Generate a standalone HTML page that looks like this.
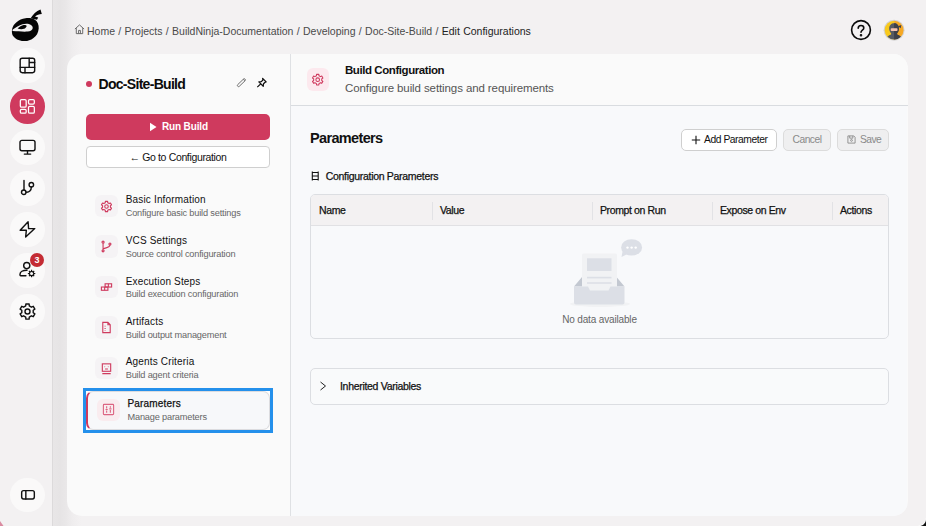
<!DOCTYPE html>
<html lang="en"><head><meta charset="utf-8"><title>Edit Configurations</title>
<style>
*{box-sizing:border-box;margin:0;padding:0}
html,body{width:926px;height:526px;overflow:hidden}
body{background:#f3f1f2;font-family:"Liberation Sans",sans-serif;color:#111;position:relative}
.abs{position:absolute}
.t{position:absolute;white-space:nowrap;line-height:1}
/* sidebar */
#side{position:absolute;left:0;top:0;width:53px;height:526px;background:#f3f1f2;border-right:1px solid #dcdadb}
#sideshadow{position:absolute;left:53px;top:0;width:28px;height:526px;background:linear-gradient(90deg,#e8e6e7 0,#e6e4e5 25%,#e9e7e8 45%,#efedee 70%,#f3f1f2 100%)}
.ic{position:absolute;left:10.200px;width:34.400px;height:34.400px;border-radius:50%;background:#faf9f9}
.ic svg{position:absolute;left:7.200px;top:7.200px;width:20px;height:20px;fill:none;stroke:#111;stroke-width:1.7;stroke-linecap:round;stroke-linejoin:round}
.ic.act{background:#cf3a5e}
.ic.act svg{stroke:#fff}
/* main card */
#card{position:absolute;left:67px;top:54px;width:841px;height:462px;border-radius:15px;background:#fafafa;overflow:hidden}
#right{position:absolute;left:223px;top:0;width:617px;height:462px;background:#f8f9fb;border-left:1px solid #dfe1e4}
#rhead{position:absolute;left:0;top:0;width:617px;height:52px;background:#fafafa;border-bottom:1px solid #d9dce0}
</style></head><body>

<div id="side"></div>
<div id="sideshadow"></div>

<!-- logo -->
<svg class="abs" style="left:5px;top:3px" width="45" height="45" viewBox="0 0 45 45">
<path d="M7 30C6.600 25 8.500 21.500 11.500 19.200C14 17 17 15.500 20.500 15.200C23.500 14.800 26.800 15 29.500 16.500C32.500 18.300 34 21.500 33.700 25.500C33.300 30 31.500 33 28.500 35C25.500 37.300 22.500 38.200 19.500 38.100C16 38 12.500 37.300 10 35C8.200 33.500 7.200 32 7 30Z" fill="#050505"/>
<path d="M25.800 15C28 11.500 31 8.500 35.500 6.600L36.800 11C34 11.300 31.800 12.200 30 13.500L33.200 14.600L32 16.800L27.500 15.800Z" fill="#050505"/>
<path d="M7.500 26.800C11 24.300 14 22.200 17.500 21.300C20 20.600 22.500 20.600 24.500 21.200C26.800 22 28 23.500 27.700 25.200C27.400 27 25.500 28.300 22.500 28.600C18 29 13 28.200 7.500 28Z" fill="#f3f1f2"/>
<path d="M12.600 25.400C14.500 23.800 16.500 22.600 18.600 22.100C20 21.800 21.200 22.200 21.700 22.900C21.200 24.300 20.200 25.300 19 25.800C17 26.500 14.500 26.300 12.600 25.400Z" fill="#050505"/>
</svg>

<div class="ic" style="top:48.300px"><svg viewBox="0 0 24 24"><rect x="3.800" y="3.800" width="17.400" height="17.400" rx="2.500"/><path d="M3.800 14.800h17.400M14.600 3.800v11M14.600 9h6.600M9.600 14.800v6.400"/></svg></div>
<div class="ic act" style="top:89.300px"><svg viewBox="0 0 24 24" style="stroke-width:1.500"><rect x="4" y="4.200" width="7" height="9.200" rx="1.500"/><rect x="13.800" y="4.200" width="7" height="5.400" rx="1.500"/><rect x="13.800" y="12.400" width="7" height="8.200" rx="1.500"/><rect x="4" y="16" width="7" height="4.600" rx="1.500"/></svg></div>
<div class="ic" style="top:130.300px"><svg viewBox="0 0 24 24"><rect x="3.600" y="4" width="18" height="12.500" rx="2.300"/><path d="M12.600 16.500v4M8.800 20.500h7.600"/></svg></div>
<div class="ic" style="top:171.300px"><svg viewBox="0 0 24 24"><circle cx="8.100" cy="17" r="2.700"/><circle cx="17.200" cy="8" r="2.700"/><path d="M8.400 3v11.300M17.200 10.700C17.200 15.300 14.600 17.400 10.800 17"/></svg></div>
<div class="ic" style="top:212.300px"><svg viewBox="0 0 24 24"><path d="M13.300 3.400 3.800 13.500h7.400l-.8 8.200L21.300 11.500h-7.400z"/></svg></div>
<div class="ic" style="top:253.300px"><svg viewBox="0 0 24 24"><circle cx="11.700" cy="6.700" r="3.700"/><path d="M12 12.200C7 12.200 3.600 14 3.600 17.200v.8c0 .5.300.8.800.8h6.300"/><path d="M16.87 11.84L18.13 11.84L18.27 13.09L19.22 13.49L20.20 12.70L21.10 13.60L20.31 14.58L20.71 15.53L21.96 15.67L21.96 16.93L20.71 17.07L20.31 18.02L21.10 19.00L20.20 19.90L19.22 19.11L18.27 19.51L18.13 20.76L16.87 20.76L16.73 19.51L15.78 19.11L14.80 19.90L13.90 19.00L14.69 18.02L14.29 17.07L13.04 16.93L13.04 15.67L14.29 15.53L14.69 14.58L13.90 13.60L14.80 12.70L15.78 13.49L16.73 13.09Z" fill="#111" stroke="none"/><circle cx="17.500" cy="16.300" r="1.800" fill="#faf9f9" stroke="none"/></svg></div>
<div class="abs" style="left:30px;top:252.800px;width:14px;height:14px;border-radius:50%;background:#c42b33"></div>
<div class="t" style="left:30px;top:255.800px;width:14px;text-align:center;font-size:9px;font-weight:bold;color:#fff">3</div>
<div class="ic" style="top:294.300px"><svg viewBox="0 0 24 24"><circle cx="12.600" cy="12.600" r="3"/><path transform="translate(.6 .6)" d="M10.07 2.90L13.93 2.90L14.16 5.34L16.68 6.80L18.91 5.78L20.84 9.13L18.85 10.54L18.85 13.46L20.84 14.87L18.91 18.22L16.68 17.20L14.16 18.66L13.93 21.10L10.07 21.10L9.84 18.66L7.32 17.20L5.09 18.22L3.16 14.87L5.15 13.46L5.15 10.54L3.16 9.13L5.09 5.78L7.32 6.80L9.84 5.34Z"/></svg></div>
<div class="ic" style="top:477.500px"><svg viewBox="0 0 24 24"><rect x="5.600" y="6.700" width="15.200" height="10" rx="2.200"/><path d="M10.600 6.700v10"/></svg></div>

<!-- breadcrumb -->
<svg class="abs" style="left:74px;top:23.800px" width="11" height="11" viewBox="0 0 12 12" fill="none" stroke="#666" stroke-width="1.050"><path d="M1 5.500 6 1l5 4.500M2.500 4.500V10.500h7V4.500M5 10.500V7h2v3.500"/></svg>
<div class="t" style="left:87px;top:25.500px;font-size:10.500px;word-spacing:.4px;color:#4a4a4a">Home / Projects / BuildNinja-Documentation / Developing / Doc-Site-Build / <span style="color:#222">Edit Configurations</span></div>

<!-- help + avatar -->
<svg class="abs" style="left:850.200px;top:19.100px" width="22" height="22" viewBox="0 0 22 22" fill="none" stroke="#0b0b0b" stroke-width="1.600" stroke-linecap="round"><circle cx="11" cy="11" r="9.400"/><path d="M8.200 9.200c0-1.700 1.200-2.700 2.800-2.700s2.800 1 2.800 2.500c0 2-2.800 2.300-2.800 4.300"/><circle cx="11" cy="16.300" r=".5" fill="#0b0b0b"/></svg>
<svg class="abs" style="left:883px;top:19px" width="23" height="23" viewBox="0 0 23 23"><defs><clipPath id="av"><circle cx="11.100" cy="11.200" r="9.400"/></clipPath></defs><circle cx="11.100" cy="11.200" r="10.500" fill="#d3d2d3"/><g clip-path="url(#av)"><rect width="11.100" height="23" fill="#f8c91c"/><rect x="11.100" width="12" height="23" fill="#f6a823"/><path d="M2.500 23c0-4.500 2.500-6.500 5.600-7.500v-1.300C6.800 13 6.200 11.300 6.200 9.500c0-3.200 2.100-5.200 4.900-5.200s4.900 2 4.900 5.200c0 1.800-.6 3.500-1.900 4.700v1.300c3.100 1 5.600 3 5.600 7.500z" fill="#555a63"/><path d="M11.100 4.300V23h8.600c0-4.500-2.500-6.500-5.600-7.500v-1.300c1.300-1.200 1.900-2.900 1.900-4.700 0-3.200-2.100-5.200-4.900-5.200z" fill="#3d4048"/><path d="M15 7.200l3.300-1.200-.6 3.200z" fill="#3d4048"/><rect x="7.700" y="9.300" width="6.800" height="2.700" rx=".8" fill="#f6c2ad"/></g></svg>

<div id="card">
  <!-- LEFT PANEL -->
  <div class="abs" style="left:19px;top:27px;width:6px;height:6px;border-radius:50%;background:#cf3a5e"></div>
  <div class="t" style="left:31.500px;top:23px;font-size:14px;font-weight:bold;color:#0b0b0b;letter-spacing:-.7px">Doc-Site-Build</div>
  <svg class="abs" style="left:168.300px;top:22.800px" width="12" height="12" viewBox="0 0 12 12" fill="none" stroke="#666" stroke-width=".9"><rect x="1.400" y="4.900" width="10.200" height="2.300" rx="1.100" transform="rotate(-44 6 6)"/><path d="M8.200 2.300l1.600 1.600"/></svg>
  <svg class="abs" style="left:189px;top:23px" width="11.500" height="11.500" viewBox="0 0 13 13" fill="none" stroke="#111" stroke-width="1.400" stroke-linejoin="round"><path d="M7.500 1.500l4 4-1.200.4-1.800 1.800-.3 2.800-5-5 2.800-.3 1.800-1.800zM5 8l-3.500 3.500"/></svg>

  <div class="abs" style="left:19px;top:60px;width:184px;height:26px;border-radius:5px;background:#cf3a5e"></div>
  <svg class="abs" style="left:82px;top:68px" width="8" height="10" viewBox="0 0 8 10"><path d="M1 .8v8.400L7.500 5z" fill="#fff"/></svg>
  <div class="t" style="left:95px;top:68px;font-size:10px;font-weight:bold;color:#fff;letter-spacing:-.15px">Run Build</div>

  <div class="abs" style="left:19px;top:92px;width:184px;height:22px;border-radius:4px;background:#fff;border:1px solid #cfcfcf"></div>
  <div class="t" style="left:19px;top:98px;width:184px;text-align:center;font-size:10.500px;color:#111;letter-spacing:-.35px">← Go to Configuration</div>

  <!-- menu -->
  <div class="mi" style="top:140.900px"><div class="mb"><svg viewBox="0 0 14 14"><circle cx="7" cy="7" r="1.900"/><path d="M5.81 1.42L8.19 1.42L8.33 2.91L9.88 3.80L11.24 3.19L12.42 5.24L11.21 6.11L11.21 7.89L12.42 8.76L11.24 10.81L9.88 10.20L8.33 11.09L8.19 12.58L5.81 12.58L5.67 11.09L4.12 10.20L2.76 10.81L1.58 8.76L2.79 7.89L2.79 6.11L1.58 5.24L2.76 3.19L4.12 3.80L5.67 2.91Z" stroke-linejoin="round"/></svg></div><div class="m1" style="top:-0.36px">Basic Information</div><div class="m2" style="top:14.31px">Configure basic build settings</div></div>
  <div class="mi" style="top:181.400px"><div class="mb"><svg viewBox="0 0 14 14"><circle cx="3.300" cy="2.300" r="1.100"/><circle cx="3.300" cy="11.700" r="1.100"/><circle cx="10.700" cy="4.300" r="1.100"/><path d="M3.300 3.400v7.200M10.700 5.400c0 3-4 2.600-7.200 4"/></svg></div><div class="m1" style="top:0.14px">VCS Settings</div><div class="m2" style="top:14.81px">Source control configuration</div></div>
  <div class="mi" style="top:221.900px"><div class="mb"><svg viewBox="0 0 14 14"><rect x="5.500" y="3" width="7" height="3.500"/><rect x="1.500" y="6.500" width="7" height="3.500"/><path d="M9 3v3.500M5 6.500V10"/></svg></div><div class="m1" style="top:0.64px">Execution Steps</div><div class="m2" style="top:14.31px">Build execution configuration</div></div>
  <div class="mi" style="top:262.400px"><div class="mb"><svg viewBox="0 0 14 14"><path d="M3 1.500h5.500L11 4v8.500H3zM8.500 1.500V4H11M5.500 5v1M5.500 7.500v1M5.500 10v.5"/></svg></div><div class="m1" style="top:0.14px">Artifacts</div><div class="m2" style="top:14.81px">Build output management</div></div>
  <div class="mi" style="top:302.900px"><div class="mb"><svg viewBox="0 0 14 14"><rect x="2.500" y="2" width="9" height="8"/><path d="M2.500 12.500h9M5 5h.5M8.500 5H9M5.500 7.500h3"/></svg></div><div class="m1" style="top:-0.36px">Agents Criteria</div><div class="m2" style="top:14.31px">Build agent criteria</div></div>

  <!-- selected -->
  <div class="abs" style="left:16px;top:334px;width:190px;height:45px;border:3px solid #2490eb;background:#fdfdfd"></div>
  <div class="abs" style="left:19px;top:337px;width:184px;height:39px;border-radius:7px;background:#f7f8fa;border:1px solid #dcdcdf;border-left:2px solid #cf3a5e"></div>
  <div class="mi" style="top:344.600px;left:30.200px"><div class="mb" style="background:#f9ecef"><svg viewBox="0 0 14 14" style="stroke:#dc6482"><rect x="1.500" y="1.500" width="11" height="11" rx=".8"/><path d="M5 3.500v2.300M5 8.200v2.300M9 3.500v1.600M9 7.600v2.900M3.800 7h2.400M7.800 6.300h2.400" /></svg></div><div class="m1" style="top:-0.07px;-webkit-text-stroke:.25px #111">Parameters</div><div class="m2" style="top:14.61px">Manage parameters</div></div>

  <!-- RIGHT -->
  <div id="right">
    <div id="rhead">
      <div class="abs" style="left:15.500px;top:14px;width:22px;height:22.500px;border-radius:6px;background:#fce9ee"></div>
      <svg class="abs" style="left:19.800px;top:18.700px;fill:none;stroke:#cf3a5e;stroke-width:1.100" width="13.400" height="13.400" viewBox="0 0 14 14"><circle cx="7" cy="7" r="1.900"/><path d="M5.81 1.42L8.19 1.42L8.33 2.91L9.88 3.80L11.24 3.19L12.42 5.24L11.21 6.11L11.21 7.89L12.42 8.76L11.24 10.81L9.88 10.20L8.33 11.09L8.19 12.58L5.81 12.58L5.67 11.09L4.12 10.20L2.76 10.81L1.58 8.76L2.79 7.89L2.79 6.11L1.58 5.24L2.76 3.19L4.12 3.80L5.67 2.91Z" stroke-linejoin="round"/></svg>
      <div class="t" style="left:54px;top:11px;font-size:11.500px;font-weight:bold;color:#111;letter-spacing:-.43px">Build Configuration</div>
      <div class="t" style="left:54px;top:28.600px;font-size:11.500px;color:#555;letter-spacing:-.1px">Configure build settings and requirements</div>
    </div>
    <div class="t" style="left:19px;top:76.500px;font-size:14.500px;font-weight:bold;color:#111;letter-spacing:-.65px">Parameters</div>

    <div class="abs" style="left:390px;top:75px;width:95.500px;height:22px;border-radius:5px;background:#fff;border:1px solid #cfcfcf"></div>
    <svg class="abs" style="left:400px;top:81px" width="10" height="10" viewBox="0 0 10 10" stroke="#111" stroke-width="1.100"><path d="M5 .8v8.400M.8 5h8.400"/></svg>
    <div class="t" style="left:413px;top:81px;font-size:10.300px;color:#111;letter-spacing:-.45px">Add Parameter</div>
    <div class="abs" style="left:492px;top:75px;width:48px;height:22px;border-radius:5px;background:#efeff0;border:1px solid #dcdcdc"></div>
    <div class="t" style="left:492px;top:81px;width:48px;text-align:center;font-size:10.300px;color:#8a8a8a;letter-spacing:-.5px">Cancel</div>
    <div class="abs" style="left:546px;top:75px;width:52px;height:22px;border-radius:5px;background:#efeff0;border:1px solid #dcdcdc"></div>
    <svg class="abs" style="left:556px;top:81px" width="9" height="9" viewBox="0 0 10 10" fill="none" stroke="#8a8a8a" stroke-width="1"><path d="M1 1h6.500L9 2.500V9H1zM3 1v2.500h3.500V1"/><circle cx="5" cy="6" r="1"/></svg>
    <div class="t" style="left:569px;top:81px;font-size:10.300px;color:#8a8a8a;letter-spacing:-.6px">Save</div>

    <svg class="abs" style="left:20px;top:117px" width="9" height="10" viewBox="0 0 9 10" fill="none" stroke="#111" stroke-width="1.100"><path d="M1.300 .5v9M7.200 .5v9M1.300 1.500h6M1.300 5h6M1.300 8.500h6"/></svg>
    <div class="t" style="left:34.700px;top:117px;font-size:10.500px;color:#111;letter-spacing:-.3px;-webkit-text-stroke:.25px #111">Configuration Parameters</div>

    <!-- table -->
    <div class="abs" style="left:19px;top:140px;width:579px;height:145px;border:1px solid #dcdee2;border-radius:5px;background:#f8f9fb;overflow:hidden">
      <div class="abs" style="left:0;top:0;width:579px;height:31px;background:#f3f1f2;border-bottom:1px solid #e1e1e4"></div>
      <div class="abs" style="left:121px;top:6.500px;width:1px;height:18px;background:#e2e2e5"></div>
      <div class="abs" style="left:281px;top:6.500px;width:1px;height:18px;background:#e2e2e5"></div>
      <div class="abs" style="left:401px;top:6.500px;width:1px;height:18px;background:#e2e2e5"></div>
      <div class="abs" style="left:521px;top:6.500px;width:1px;height:18px;background:#e2e2e5"></div>
      <div class="t th" style="left:8px">Name</div>
      <div class="t th" style="left:129px">Value</div>
      <div class="t th" style="left:289px">Prompt on Run</div>
      <div class="t th" style="left:409px">Expose on Env</div>
      <div class="t th" style="left:529px">Actions</div>
    </div>
    <!-- empty illustration -->
    <svg class="abs" style="left:277px;top:182px" width="80" height="76" viewBox="0 0 80 76">
      <ellipse cx="32" cy="68" rx="30" ry="3" fill="#f1f2f4"/>
      <path d="M6 50.500l8-9.500v9.500zM56.500 50.500l-8-9.500v9.500z" fill="#c3c8d1"/>
      <rect x="14" y="17.400" width="35" height="40" rx="1.500" fill="#f1f2f4"/>
      <rect x="19" y="22.300" width="24.500" height="12.700" fill="#dcdfe6"/>
      <rect x="19" y="40.800" width="24.500" height="1.600" fill="#dcdfe6"/>
      <rect x="19" y="46.200" width="24.500" height="1.600" fill="#dcdfe6"/>
      <path d="M6 50.500h14l2 4h18.500l2-4h14v16a2 2 0 0 1-2 2H8a2 2 0 0 1-2-2z" fill="#dcdfe6"/>
      <ellipse cx="63.600" cy="11.400" rx="10.500" ry="8.200" fill="#dcdfe6"/>
      <path d="M54.500 15.500l-1 5.500 6-3z" fill="#dcdfe6"/>
      <circle cx="59.500" cy="11.600" r="1.200" fill="#fff"/><circle cx="63.600" cy="11.600" r="1.200" fill="#fff"/><circle cx="67.700" cy="11.600" r="1.200" fill="#fff"/>
    </svg>
    <div class="t" style="left:19px;top:261px;width:579px;text-align:center;font-size:10px;color:#666;letter-spacing:-.15px">No data available</div>

    <!-- inherited -->
    <div class="abs" style="left:19px;top:314px;width:579px;height:37px;border:1px solid #dcdee2;border-radius:5px;background:#f9fafb"></div>
    <svg class="abs" style="left:27.500px;top:327px" width="8" height="10" viewBox="0 0 8 10" fill="none" stroke="#222" stroke-width="1"><path d="M1.500 1l5 4-5 4"/></svg>
    <div class="t" style="left:49px;top:327px;font-size:10.500px;color:#111;letter-spacing:-.3px;-webkit-text-stroke:.25px #111">Inherited Variables</div>
  </div>
</div>

<!-- window corner artefacts -->
<svg class="abs" style="left:914px;top:514px" width="12" height="12" viewBox="0 0 12 12"><path d="M12 4.500C12 8.800 8.800 12 4.500 12" fill="none" stroke="#fbfbfb" stroke-width="1.200"/><path d="M12 5.200C12 9 9 12 5.200 12h6.800z" fill="#111"/></svg>
<svg class="abs" style="left:0;top:521px" width="4" height="5" viewBox="0 0 4 5"><path d="M0 0l3.500 5H0z" fill="#c9476a" opacity=".6"/></svg>

<style>
.mi{position:absolute;left:28.400px;width:170px;height:24px}
.mb{position:absolute;left:0;top:0;width:22.400px;height:22.400px;border-radius:6px;background:#f5f3f5}
.mb svg{position:absolute;left:4.700px;top:4.700px;width:13px;height:13px;fill:none;stroke:#cf3a5e;stroke-width:1.200}
.m1{position:absolute;left:30.300px;top:0;font-size:10px;letter-spacing:.17px;color:#111;white-space:nowrap;line-height:1}
.m2{position:absolute;left:30.300px;top:13.600px;font-size:9.200px;letter-spacing:-.17px;color:#666;white-space:nowrap;line-height:1}
.th{top:10px;font-size:10.500px;color:#111;letter-spacing:-.38px;-webkit-text-stroke:.25px #111}
</style>
</body></html>
